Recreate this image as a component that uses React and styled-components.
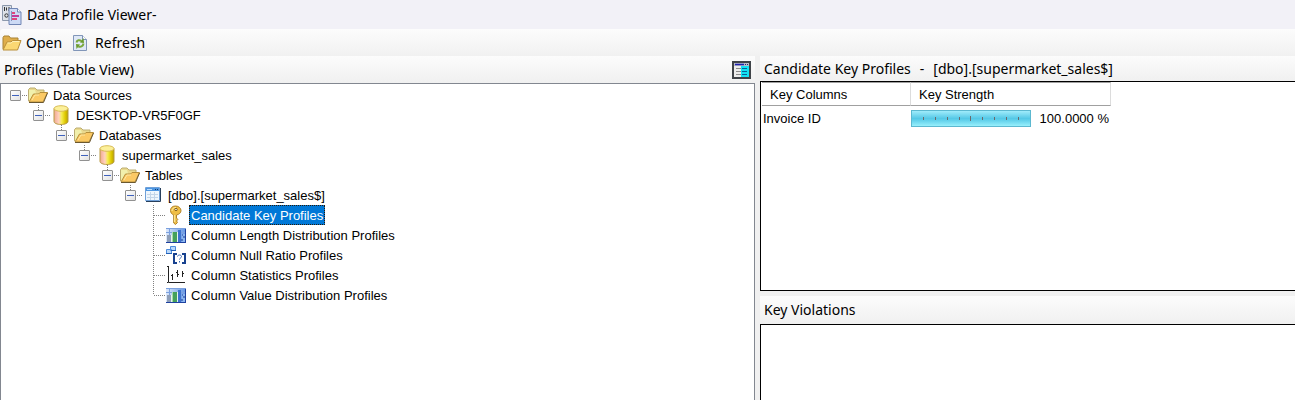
import React from "react";
import styled, { createGlobalStyle } from "styled-components";

const Global = createGlobalStyle`
  * { box-sizing: border-box; }
  html, body, #root { height: 100%; margin: 0; }
  body { overflow: hidden; background: #f0f0f0; color: #000; }
`;

const UI = `"Noto Sans", "Open Sans", sans-serif`;
const SANS = `"Liberation Sans", Arial, sans-serif`;

const Window = styled.div`
  display: flex;
  flex-direction: column;
  height: 100%;
  font: 14px/20px ${UI};
`;
const TitleBar = styled.header`
  display: flex;
  align-items: center;
  gap: 5px;
  height: 29px;
  padding-left: 2px;
  background: #f2f1f7;
`;
const Title = styled.h1`
  margin: 0;
  font: inherit;
`;
const Toolbar = styled.div`
  display: flex;
  gap: 10px;
  height: 27px;
  padding-left: 2px;
  border-radius: 3px 0 0 0;
  background: linear-gradient(#fcfcfc, #f1f1f1);
`;
const ToolButton = styled.button`
  display: flex;
  align-items: center;
  gap: ${(p) => p.$gap}px;
  padding: 0;
  border: 0;
  background: none;
  color: inherit;
  font: inherit;
`;
const Main = styled.main`
  display: grid;
  grid-template-columns: minmax(0, 755fr) minmax(0, 535fr);
  gap: 5px;
  flex: 1;
  min-height: 0;
`;
const Column = styled.section`
  display: flex;
  flex-direction: column;
  min-height: 0;
`;
const PaneHeader = styled.div`
  display: flex;
  flex: none;
  align-items: center;
  justify-content: space-between;
  height: ${(p) => p.$height}px;
  padding: 0 4px;
  background: linear-gradient(#fcfcfc, #f0f0f0);
`;
const PaneTitle = styled.h2`
  display: flex;
  gap: 9px;
  margin: 0;
  font: inherit;
  white-space: nowrap;
`;
const ViewButton = styled.button`
  display: flex;
  padding: 0;
  border: 0;
  background: none;
`;
const TreePane = styled.div`
  flex: 1;
  min-height: 0;
  padding: 1px 0 0 9px;
  overflow: hidden;
  border: solid #828790;
  border-width: 1px 1px 0;
  background: #fff;
  font: 13px/20px ${SANS};
`;
const Branch = styled.ul`
  margin: 0;
  padding: 0 0 0 ${(p) => (p.$root ? 0 : 23)}px;
  list-style: none;
`;
const Row = styled.div`
  display: flex;
  align-items: center;
  height: 20px;
`;
const dotsX = "repeating-linear-gradient(90deg, #808080 0 1px, transparent 1px 2px)";
const dotsY = "repeating-linear-gradient(#808080 0 1px, transparent 1px 2px)";
const Guide = styled.span`
  display: flex;
  align-items: center;
  width: 18px;
  height: 20px;
  background:
    ${dotsX} 6px 10px / 12px 1px no-repeat,
    ${dotsY} 5px 0 / 1px ${(p) => (p.$root ? 0 : p.$last ? 10 : 20)}px no-repeat;
`;
const Expander = styled.button`
  position: relative;
  width: 11px;
  height: 11px;
  padding: 0;
  border: 1px solid #919191;
  border-radius: 1px;
  background: linear-gradient(135deg, #fff, #e2e2e2);
  &::after {
    content: "";
    position: absolute;
    inset: 4px 1px auto;
    height: 1px;
    background: #3f62bd;
  }
`;
const IconSlot = styled.span`
  display: flex;
  width: 20px;
  height: 20px;
  align-items: center;
  justify-content: center;
`;
const Label = styled.span`
  height: 20px;
  margin-left: 3px;
  padding: 1px 2px 0;
  white-space: nowrap;
  color: ${(p) => (p.$selected ? "#fff" : "#000")};
  background: ${(p) => (p.$selected ? "#0078d7" : "none")};
  outline: ${(p) => (p.$selected ? "1px dotted #2b1a08" : "none")};
  outline-offset: -1px;
`;
const DataPane = styled.div`
  flex: ${(p) => (p.$fill ? "1" : "none")};
  height: ${(p) => (p.$fill ? "auto" : "210px")};
  padding-left: 1px;
  border: 1px solid #000;
  border-right: 0;
  border-bottom-width: ${(p) => (p.$fill ? 0 : 1)}px;
  background: #fff;
`;
const Spacer = styled.div`
  flex: none;
  height: 5px;
`;
const Table = styled.table`
  width: 349px;
  table-layout: fixed;
  border-collapse: separate;
  border-spacing: 0;
  font: 13px/20px ${SANS};
`;
const HeadCell = styled.th`
  width: ${(p) => p.$width}px;
  height: 24px;
  padding: 1px 8px 0;
  border: solid #a0a0a0;
  border-width: 1px 0;
  border-right: 1px solid #dcdcdc;
  text-align: left;
  font-weight: 400;
`;
const Cell = styled.td`
  height: 25px;
  padding: 0 2px 0 ${(p) => (p.$flush ? 0 : 1)}px;
`;
const Strength = styled.div`
  display: flex;
  align-items: center;
  justify-content: space-between;
`;
const Bar = styled.div`
  display: flex;
  align-items: center;
  justify-content: space-evenly;
  width: 120px;
  height: 17px;
  border: 1px solid #5cb8d0;
  background: linear-gradient(#a0ecfb, #55c8e6 50%, #5fcfea 60%, #98f0fc);
`;
const Tick = styled.i`
  width: 1px;
  height: ${(p) => (p.$major ? 5 : 3)}px;
  background: #6b6a6c;
`;

const AppIcon = () => (
  <svg width="20" height="20" viewBox="0 0 20 20">
    <path d="M.5.500h9v15h-9z" fill="#dde1e8" stroke="#8c98ac" />
    <path d="M2.500 2v4M7 2v4" stroke="#333" />
    <path d="M4 2.500h1v3H4z" fill="#333" />
    <circle cx="4.500" cy="10.500" r="1.700" fill="none" stroke="#333" />
    <path d="M7 3.500h8.500L19 7v12.500H7z" fill="#cddaf5" stroke="#7085b4" />
    <path d="M15.500 3.500V7H19" fill="#fff" stroke="#7085b4" />
    <path d="M9.500 6v10" stroke="#8793bd" />
    <path d="M10 8h3M10 14h5" stroke="#e0457c" strokeWidth="2" />
    <path d="M10 11h7" stroke="#c03a9b" strokeWidth="2" />
  </svg>
);
const OpenIcon = () => (
  <svg width="20" height="18" viewBox="0 0 20 18">
    <path d="M1 15V3.500L2 2h5l1.500 2H16v4" fill="#dfae4b" stroke="#a98335" />
    <path d="M1 16 5 8h4l1.500-1.500H19L15.500 16z" fill="#fbd873" stroke="#b98f3a" />
    <path d="M5.500 9H9l1.800-1.500h6.500" fill="none" stroke="#fff0b4" />
  </svg>
);
const RefreshIcon = () => (
  <svg width="16" height="18" viewBox="0 0 16 18">
    <path d="M1.500 1.500h9l4 4v11h-13z" fill="#dfe8f6" stroke="#8196b8" />
    <path d="M10.500 1.500v4h4" fill="#fff" stroke="#7d92b5" />
    <path d="M4.500 8.500c.5-2.500 3-3 5-1.500M11.500 9.500c-.5 3-3 4-5.200 2.800" fill="none" stroke="#79a83c" strokeWidth="2" />
    <path d="m8 8.500 4 .5-.5-5zM8 10.500l-4-.5.500 5z" fill="#6a9b2c" />
  </svg>
);
const ViewIcon = () => (
  <svg width="19" height="18" viewBox="0 0 19 18">
    <path d="M1 1h17v16H1z" fill="#fff" stroke="#3f4348" strokeWidth="2" />
    <path d="M2 2h15v3H2z" fill="#b8bcc8" />
    <path d="M3 3.500h9" stroke="#2020b0" strokeWidth="1.500" />
    <path d="M13 3.500h1m1 0h1" stroke="#222a70" />
    <path d="M2 5h7v11H2z" fill="#ececec" />
    <path d="M9 5h8v11H9z" fill="#12e2f4" />
    <path d="M4 7.500h5M4 10.500h5M4 13.500h5" stroke="#8b8b8b" />
    <path d="M10 7.500h5M10 10.500h5M10 13.500h5" stroke="#06629a" />
  </svg>
);
const FolderIcon = () => (
  <svg width="20" height="16" viewBox="0 0 20 16">
    <path d="M.5 14V2.500L2 1h5l2 2h7v4" fill="#ead98e" stroke="#bcae72" />
    <path d="M1 3h6l3 10H1z" fill="#f1f0ac" />
    <path d="m1 15 4.500-8h5l1.500-1.500h7.500L15 15z" fill="#fbc964" stroke="#b58e3b" />
    <path d="m4 13 3-5h4" fill="none" stroke="#ffe7a0" />
    <path d="M1 15.500h14.500L19.500 6" fill="none" stroke="#6b5830" />
  </svg>
);
const DatabaseIcon = () => (
  <svg width="16" height="20" viewBox="0 0 16 20">
    <defs>
      <linearGradient id="drum">
        <stop offset="0" stopColor="#f0a890" />
        <stop offset=".35" stopColor="#ffd2c0" />
        <stop offset=".55" stopColor="#f5ed50" />
        <stop offset=".8" stopColor="#dfc800" />
        <stop offset="1" stopColor="#b5a300" />
      </linearGradient>
    </defs>
    <path d="M1 3.500v13c0 1.600 3 3 7 3s7-1.400 7-3v-13z" fill="url(#drum)" stroke="#b99b45" />
    <ellipse cx="8" cy="3.500" rx="7" ry="2.800" fill="#fcf09a" stroke="#d8bc55" />
  </svg>
);
const TableIcon = () => (
  <svg width="16" height="16" viewBox="0 0 16 16">
    <path d="M.5.500h14v13H.5z" fill="#eef6fd" stroke="#6fa0d8" />
    <path d="M1 1h13v3H1z" fill="#4c96e2" />
    <path d="M2 2.500h5" stroke="#b7dcff" />
    <path d="M10 2.500h1m1 0h1" stroke="#123a70" />
    <path d="M2 7.500h11M2 10.500h11M5.500 5v8M9.500 5v8" stroke="#c3d5e8" />
    <path d="M15.500 1v13.500H1" fill="none" stroke="#28405c" />
  </svg>
);
const KeyIcon = () => (
  <svg width="20" height="20" viewBox="0 0 20 20">
    <path d="M9.500 1C6.200 1 4.500 3 4.500 5.500c0 2 1.200 3.700 3.200 4.500v8L9.500 19.500l2-2-1-1.500 1.300-1.500-1.300-1.500V10c2.800-.6 4.500-2.300 4.500-4.500C15 3 12.500 1 9.500 1z" fill="#efbe45" stroke="#b0842c" />
    <path d="M6 6c0-2.500 2-3.800 4-3.500M8.700 10v7" fill="none" stroke="#fff0a8" />
    <circle cx="10" cy="4.500" r="1.200" fill="#fff" stroke="#7a5a18" />
  </svg>
);
const HistogramIcon = () => (
  <svg width="20" height="16" viewBox="0 0 20 16">
    <defs>
      <linearGradient id="chartSky">
        <stop offset="0" stopColor="#dce8fb" />
        <stop offset="1" stopColor="#5f93e4" />
      </linearGradient>
    </defs>
    <path d="M0 1h20v15H0z" fill="url(#chartSky)" />
    <path d="M0 1.500h20M0 5.500h20M3.500 1v15M14.500 1v15" stroke="#7ba0de" />
    <path d="M1 8h4v7H1z" fill="#8f9fb8" />
    <path d="M6 5h5v10H6z" fill="#45a05c" />
    <path d="M6.500 5v10" stroke="#a8dba6" />
    <path d="M12 3h3v12h-3z" fill="#3c72cf" />
    <path d="M16 7h3v8h-3z" fill="#8cb6f0" />
    <path d="M5.500 8v7M11.500 5v10" stroke="#e4f3ee" />
    <path d="M0 15.500h20M19.500 2v14" stroke="#1f429f" />
    <path d="M15 13h2m0-3h2m-3-2h1" stroke="#173a94" />
  </svg>
);
const NullIcon = () => (
  <svg width="20" height="20" viewBox="0 0 20 20">
    <path d="M.5 4.500h5v4h-5zM4.500 1.500h5v4h-5z" fill="#b9d8fa" stroke="#4c8bdc" />
    <path d="M0 8.500h6M5 5.500h5" stroke="#2462b8" />
    <path d="M11 9H8v9h3M16 9h3v9h-3" fill="none" stroke="#17418f" strokeWidth="2" />
    <path d="M11.500 11.500c0-2 4-2 4 0 0 1.500-2 1.500-2 3M13.500 16v1.500" fill="none" stroke="#3866b0" />
  </svg>
);
const StatsIcon = () => (
  <svg width="20" height="18" viewBox="0 0 20 18">
    <path d="M2.500 0v16.500H19" fill="none" stroke="#222" />
    <path d="M1 .500h2M1 16.500h1M6.500 8v6M11.500 4v7M16.500 5v6M5 9.500h1M10 6.500h1M12 8.500h1M17 7.500h1" stroke="#222" />
  </svg>
);

const tree = {
  label: "Data Sources", icon: FolderIcon, children: [{
    label: "DESKTOP-VR5F0GF", icon: DatabaseIcon, children: [{
      label: "Databases", icon: FolderIcon, children: [{
        label: "supermarket_sales", icon: DatabaseIcon, children: [{
          label: "Tables", icon: FolderIcon, children: [{
            label: "[dbo].[supermarket_sales$]", icon: TableIcon, children: [
              { label: "Candidate Key Profiles", icon: KeyIcon, selected: true },
              { label: "Column Length Distribution Profiles", icon: HistogramIcon },
              { label: "Column Null Ratio Profiles", icon: NullIcon },
              { label: "Column Statistics Profiles", icon: StatsIcon },
              { label: "Column Value Distribution Profiles", icon: HistogramIcon },
            ],
          }],
        }],
      }],
    }],
  }],
};

function Node({ node, root, last }) {
  const Icon = node.icon;
  return (
    <li>
      <Row>
        <Guide $root={root} $last={last}>
          {node.children && <Expander aria-label={`Collapse ${node.label}`} />}
        </Guide>
        <IconSlot><Icon /></IconSlot>
        <Label $selected={node.selected}>{node.label}</Label>
      </Row>
      {node.children && (
        <Branch>
          {node.children.map((child, i) => (
            <Node key={child.label} node={child} last={i === node.children.length - 1} />
          ))}
        </Branch>
      )}
    </li>
  );
}

export default function App() {
  return (
    <Window>
      <Global />
      <TitleBar><AppIcon /><Title>Data Profile Viewer-</Title></TitleBar>
      <Toolbar>
        <ToolButton $gap={4}><OpenIcon />Open</ToolButton>
        <ToolButton $gap={7}><RefreshIcon />Refresh</ToolButton>
      </Toolbar>
      <Main>
        <Column>
          <PaneHeader $height={27}>
            <PaneTitle>Profiles (Table View)</PaneTitle>
            <ViewButton aria-label="Switch view"><ViewIcon /></ViewButton>
          </PaneHeader>
          <TreePane>
            <Branch $root><Node node={tree} root last /></Branch>
          </TreePane>
        </Column>
        <Column>
          <PaneHeader $height={25}>
            <PaneTitle>
              <span>Candidate Key Profiles</span>
              <span>-</span>
              <span>[dbo].[supermarket_sales$]</span>
            </PaneTitle>
          </PaneHeader>
          <DataPane>
            <Table>
              <thead>
                <tr><HeadCell $width={149}>Key Columns</HeadCell><HeadCell $width={200}>Key Strength</HeadCell></tr>
              </thead>
              <tbody>
                <tr>
                  <Cell>Invoice ID</Cell>
                  <Cell $flush>
                    <Strength>
                      <Bar>{Array.from({ length: 9 }, (_, i) => <Tick key={i} $major={i === 4} />)}</Bar>
                      100.0000 %
                    </Strength>
                  </Cell>
                </tr>
              </tbody>
            </Table>
          </DataPane>
          <Spacer />
          <PaneHeader $height={28}><PaneTitle>Key Violations</PaneTitle></PaneHeader>
          <DataPane $fill />
        </Column>
      </Main>
    </Window>
  );
}
